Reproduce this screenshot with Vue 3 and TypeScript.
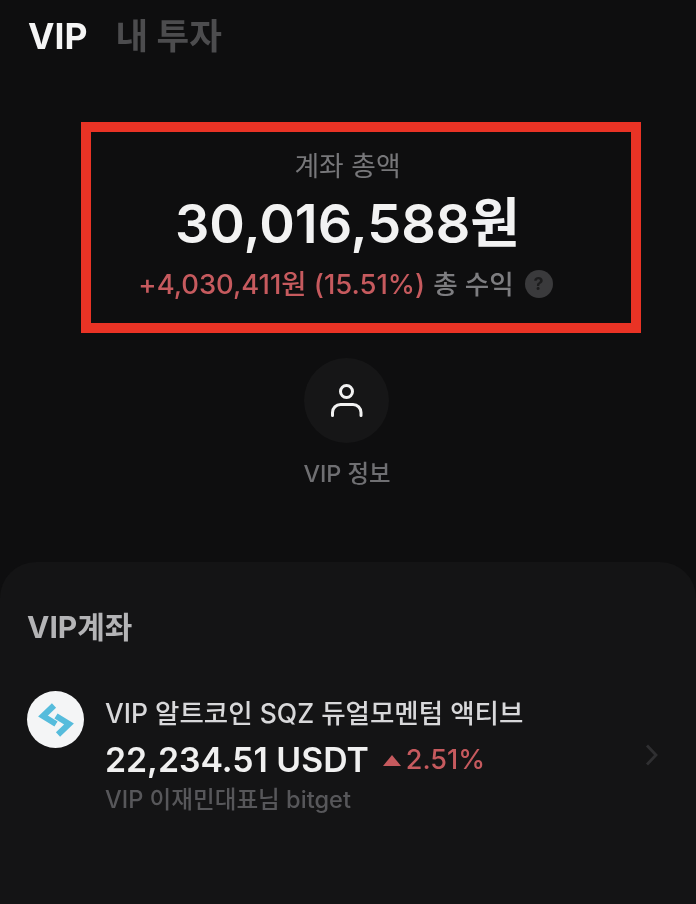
<template>
  <div class="page">
    <nav class="tabs">
      <span class="tab active">VIP</span>
      <span class="tab">내 투자</span>
    </nav>

    <section class="total">
      <div class="total-label">계좌 총액</div>
      <div class="total-amount">30,016,588원</div>
      <div class="total-profit">
        <span class="up">+4,030,411원 (15.51%)</span>
        <span class="profit-label">총 수익</span>
        <span class="help">?</span>
      </div>
    </section>

    <div class="info">
      <div class="info-circle">
        <svg width="37" height="37" viewBox="0 0 37 37" fill="none" stroke="#f2f2f2" stroke-width="3" stroke-linecap="round">
          <circle cx="18.5" cy="9.5" r="6" />
          <path d="M4.5 33.5v-3a8 8 0 0 1 8-8h12.5a8 8 0 0 1 8 8v3" />
        </svg>
      </div>
      <div class="info-label">VIP 정보</div>
    </div>

    <section class="sheet">
      <h2 class="sheet-title">VIP계좌</h2>
      <div class="row">
        <div class="logo">
          <svg width="40" height="40" viewBox="0 0 40 40" fill="none" stroke="#56bcdc" stroke-width="6">
            <path d="M18 5.5L7 16l13 8" />
            <path d="M22 34.5L33 24l-13-8" />
          </svg>
        </div>
        <div class="row-body">
          <div class="row-name">VIP 알트코인 SQZ 듀얼모멘텀 액티브</div>
          <div class="row-value">
            <span class="value">{{ value }}</span>
            <span class="change"><i class="arrow"></i>{{ change }}</span>
          </div>
          <div class="row-sub">VIP 이재민대표님 bitget</div>
        </div>
        <svg class="chevron" width="16" height="24" viewBox="0 0 16 24" fill="none" stroke="#2f2f31" stroke-width="2.8">
          <path d="M3 2.5l9 9.5-9 9.5" />
        </svg>
      </div>
    </section>
  </div>
</template>

<script setup lang="ts">
const value = '22,234.51 USDT';
const change = '2.51%';
</script>

<style>
html, body {
  background: #0e0e0f;
}
</style>

<style scoped>
.page {
  width: 696px;
  height: 904px;
  overflow: hidden;
  display: flex;
  flex-direction: column;
  background: #0e0e0f;
  font-family: Inter, "Noto Sans CJK KR", sans-serif;
  filter: blur(0.6px);
}
.tabs {
  display: flex;
  gap: 28px;
  padding: 15px 28px 0;
  height: 44px;
  align-items: center;
  font-size: 35.5px;
  line-height: 46px;
  font-weight: 700;
}
.tab {
  color: #4c4c4e;
}
.tab.active {
  color: #f5f5f5;
}
.total {
  margin: 63px 0 0 81px;
  width: 560px;
  height: 211px;
  box-sizing: border-box;
  border: 10px solid #e93325;
  padding-right: 27px;
  display: flex;
  flex-direction: column;
  align-items: center;
}
.total-label {
  margin-top: 17px;
  font-size: 26.8px;
  line-height: 34px;
  color: #77777a;
  white-space: nowrap;
}
.total-amount {
  margin-top: 10px;
  font-size: 54px;
  line-height: 62px;
  font-weight: 600;
  color: #f2f2f2;
  white-space: nowrap;
}
.total-profit {
  margin: 11px 4px 0 0;
  display: flex;
  align-items: center;
  gap: 8px;
  font-size: 26.6px;
  line-height: 36px;
  white-space: nowrap;
}
.up {
  font-size: 27.4px;
  font-weight: 500;
  color: #c65a5e;
}
.profit-label {
  color: #7d7d80;
  font-weight: 500;
}
.help {
  width: 28px;
  height: 28px;
  margin-left: 3px;
  border-radius: 50%;
  background: #3a3a3c;
  color: #1c1c1d;
  font-size: 18px;
  line-height: 28px;
  font-weight: 700;
  text-align: center;
}
.info {
  margin-top: 25px;
  display: flex;
  flex-direction: column;
  align-items: center;
}
.info-circle {
  width: 85px;
  height: 85px;
  margin-right: 3px;
  border-radius: 50%;
  background: #161617;
  display: flex;
  align-items: center;
  justify-content: center;
}
.info-label {
  margin-top: 15px;
  margin-right: 2px;
  font-size: 23.4px;
  line-height: 32px;
  font-weight: 500;
  color: #6f6f72;
}
.sheet {
  margin-top: 72px;
  flex: 1;
  border-radius: 36px 36px 0 0;
  background: #141415;
  padding: 46px 28px 0 27px;
}
.sheet-title {
  margin: 0;
  font-size: 30px;
  line-height: 38px;
  font-weight: 700;
  color: #b4b4b6;
  white-space: nowrap;
}
.row {
  margin-top: 46px;
  display: flex;
  align-items: center;
}
.logo {
  width: 57px;
  height: 57px;
  margin-top: -1px;
  align-self: flex-start;
  flex: none;
  border-radius: 50%;
  background: #f4f5f6;
  display: flex;
  align-items: center;
  justify-content: center;
}
.row-body {
  margin-left: 21px;
  padding: 3px 0;
  flex: 1;
}
.row-name {
  font-size: 26.5px;
  line-height: 36px;
  font-weight: 500;
  color: #d8d8da;
  white-space: nowrap;
}
.row-value {
  margin-top: 9px;
  display: flex;
  align-items: center;
  gap: 14px;
  line-height: 40px;
}
.value {
  font-size: 33.8px;
  font-weight: 600;
  color: #f0f0f0;
  white-space: nowrap;
}
.change {
  display: flex;
  align-items: center;
  gap: 5px;
  font-size: 27px;
  font-weight: 500;
  color: #c65a5e;
}
.arrow {
  width: 0;
  height: 0;
  border-left: 9px solid transparent;
  border-right: 9px solid transparent;
  border-bottom: 11px solid #c65a5e;
}
.row-sub {
  margin-top: 5px;
  font-size: 23.6px;
  line-height: 30px;
  font-weight: 500;
  color: #57575a;
  white-space: nowrap;
}
.chevron {
  flex: none;
  margin: 0 8px 0 0;
}
</style>
